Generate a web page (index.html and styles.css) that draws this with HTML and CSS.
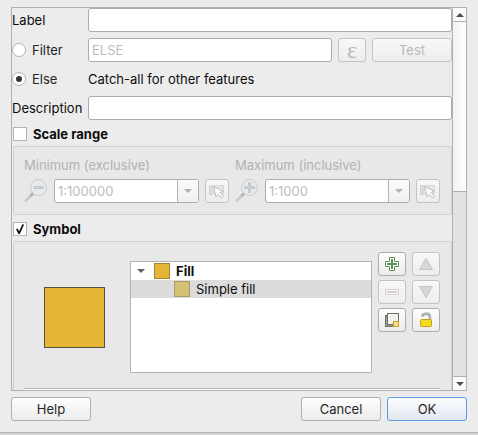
FILE: index.html
```html
<!DOCTYPE html>
<html lang="en">
<head>
<meta charset="utf-8">
<title>Edit Rule</title>
<link rel="stylesheet" href="styles.css">
</head>
<body>
<form class="dialog">
  <div class="scroll-area">
    <div class="viewport">
      <div class="rule-form">
        <label for="rule-label">Label</label>
        <input class="field" id="rule-label" type="text">

        <label class="choice"><input class="radio" type="radio" name="mode"><span>Filter</span></label>
        <div class="filter-row">
          <input class="field" type="text" aria-label="Filter expression" placeholder="ELSE" disabled>
          <button class="btn tool epsilon" type="button" aria-label="Expression builder" disabled>ε</button>
          <button class="btn wide" type="button" disabled>Test</button>
        </div>

        <label class="choice"><input class="radio" type="radio" name="mode" checked><span>Else</span></label>
        <span>Catch-all for other features</span>

        <label for="rule-description">Description</label>
        <input class="field" id="rule-description" type="text">
      </div>

      <section class="section">
        <label class="section-title"><input class="check" type="checkbox"><span>Scale range</span></label>
        <div class="group scales">
          <div class="scale">
            <label class="scale-label" for="scale-min">Minimum (exclusive)</label>
            <div class="scale-row">
              <svg class="lens" viewBox="0 0 24 24" aria-hidden="true">
                <path class="lens-handle" d="M1 22.500L8 15.500"/>
                <path class="lens-joint" d="M6.500 17L9 14.500"/>
                <circle class="lens-glass" cx="14.500" cy="8.500" r="8"/>
                <rect class="lens-sign" x="9.500" y="7.500" width="10" height="2" rx="1"/>
              </svg>
              <span class="combo">
                <select class="field" id="scale-min" disabled><option>1:100000</option></select>
              </span>
              <button class="btn pick" type="button" aria-label="Set minimum to canvas scale" disabled>
                <svg viewBox="0 0 18 18" aria-hidden="true">
                  <path class="pick-back" d="M1.500 3.500h3v9h-3z"/>
                  <path class="pick-map" d="M4.500 3.500h11v8h-11z"/>
                  <path class="pick-arrow" d="M5.500 4.500l2.500 10.500 2.200-2.500 3.300 3.500 2-2-3.300-3.300 3-1.700z"/>
                </svg>
              </button>
            </div>
          </div>
          <div class="scale">
            <label class="scale-label" for="scale-max">Maximum (inclusive)</label>
            <div class="scale-row">
              <svg class="lens" viewBox="0 0 24 24" aria-hidden="true">
                <path class="lens-handle" d="M1 22.500L8 15.500"/>
                <path class="lens-joint" d="M6.500 17L9 14.500"/>
                <circle class="lens-glass" cx="14.500" cy="8.500" r="8"/>
                <path class="lens-sign" d="M13.500 3.500h2v4h4v2h-4v4h-2v-4h-4v-2h4z"/>
              </svg>
              <span class="combo">
                <select class="field" id="scale-max" disabled><option>1:1000</option></select>
              </span>
              <button class="btn pick" type="button" aria-label="Set maximum to canvas scale" disabled>
                <svg viewBox="0 0 18 18" aria-hidden="true">
                  <path class="pick-back" d="M1.500 3.500h3v9h-3z"/>
                  <path class="pick-map" d="M4.500 3.500h11v8h-11z"/>
                  <path class="pick-arrow" d="M5.500 4.500l2.500 10.500 2.200-2.500 3.300 3.500 2-2-3.300-3.300 3-1.700z"/>
                </svg>
              </button>
            </div>
          </div>
        </div>
      </section>

      <section class="section">
        <label class="section-title"><input class="check" type="checkbox" checked><span>Symbol</span></label>
        <div class="group symbol">
          <div class="symbol-editor">
            <div class="preview"></div>
            <ul class="tree">
              <li class="tree-row">
                <svg class="expander" viewBox="0 0 8 4" aria-hidden="true"><path d="M0 0h8L4 4z"/></svg>
                <i class="swatch"></i><b>Fill</b>
              </li>
              <li class="tree-row child"><i class="swatch muted"></i><span>Simple fill</span></li>
            </ul>
            <div class="tools">
              <button class="btn tool" type="button" aria-label="Add symbol layer">
                <svg viewBox="0 0 16 16" aria-hidden="true">
                  <path d="M5.500 1.500h5v4h4v5h-4v4h-5v-4h-4v-5h4z" fill="#fff" stroke="#5b9159"/>
                  <path d="M7 3h2v4h4v2H9v4H7V9H3V7h4z" fill="#5b9159"/>
                </svg>
              </button>
              <button class="btn tool" type="button" aria-label="Move up" disabled>
                <svg viewBox="0 0 16 16" aria-hidden="true"><path d="M8 2.500L14.500 13.500h-13z" fill="#d6d8da" stroke="#c3c5c7"/></svg>
              </button>
              <button class="btn tool" type="button" aria-label="Remove symbol layer" disabled>
                <svg viewBox="0 0 16 16" aria-hidden="true">
                  <rect x="1.500" y="5.500" width="13" height="5" fill="#fafafa" stroke="#dccfcf"/>
                  <rect x="3" y="7" width="10" height="2" fill="#dfcfcf"/>
                </svg>
              </button>
              <button class="btn tool" type="button" aria-label="Move down" disabled>
                <svg viewBox="0 0 16 16" aria-hidden="true"><path d="M8 13.500L14.500 2.500h-13z" fill="#d6d8da" stroke="#c3c5c7"/></svg>
              </button>
              <button class="btn tool" type="button" aria-label="Duplicate layer">
                <svg viewBox="0 0 16 16" aria-hidden="true">
                  <rect x="1.500" y="3.500" width="10" height="11" fill="#9a9b95" stroke="#6e6f69"/>
                  <rect x="3.500" y="1.500" width="11" height="11" fill="#f2f2f0" stroke="#6e6f69"/>
                  <rect x="9.500" y="9.500" width="5" height="5" fill="#f7e08a" stroke="#c9a21c"/>
                </svg>
              </button>
              <button class="btn tool" type="button" aria-label="Unlock colour">
                <svg viewBox="0 0 16 16" aria-hidden="true">
                  <path d="M4 4.500C5 1 12 0 12 5.500V7" fill="none" stroke="#8f908c" stroke-width="2.500"/>
                  <path d="M4 4.500C5 1 12 0 12 5.500V7" fill="none" stroke="#e2e2e0"/>
                  <rect x="2.500" y="7.500" width="11" height="7" rx="1" fill="#f0dc1e" stroke="#c9a013"/>
                </svg>
              </button>
            </div>
          </div>
          <hr class="rule">
        </div>
      </section>
    </div>

    <div class="scrollbar">
      <button class="step" type="button" aria-label="Scroll up"><svg viewBox="0 0 8 4" aria-hidden="true"><path d="M0 4h8L4 0z"/></svg></button>
      <div class="track"><div class="thumb"></div></div>
      <button class="step down" type="button" aria-label="Scroll down"><svg viewBox="0 0 8 4" aria-hidden="true"><path d="M0 0h8L4 4z"/></svg></button>
    </div>
  </div>

  <footer class="actions">
    <button class="btn wide" type="button">Help</button>
    <span class="spacer"></span>
    <button class="btn wide" type="button">Cancel</button>
    <button class="btn wide default" type="submit">OK</button>
  </footer>
</form>
</body>
</html>
```
FILE: styles.css
```css
* {
  box-sizing: border-box;
}

body {
  margin: 0;
  background: #d2d2d2;
  color: #0c0c0c;
  font: 13px/16px Inter, "Liberation Sans", sans-serif;
}

button,
input,
select {
  margin: 0;
  font: inherit;
  color: inherit;
}

svg {
  display: block;
}

.dialog {
  display: flex;
  flex-direction: column;
  gap: 6px;
  height: calc(100vh - 2px);
  padding: 7px 11px 11px;
  border-bottom: 1px solid #b4b4b4;
  background: #ececec;
}

/* Scrolling panel */

.scroll-area {
  display: flex;
  flex: 1;
  min-height: 0;
  border: 1px solid #b0b0b0;
}

.viewport {
  flex: 1;
  min-width: 0;
  overflow: hidden;
}

.scrollbar {
  display: flex;
  flex-direction: column;
  width: 14px;
  border-left: 1px solid #b0b0b0;
}

.step {
  display: grid;
  place-items: center;
  height: 14px;
  padding: 0;
  border: 0;
  border-bottom: 1px solid #b0b0b0;
  background: #fafafa;
}

.step.down {
  border-top: 1px solid #b0b0b0;
  border-bottom: 0;
}

.step svg {
  width: 8px;
  fill: #4c4c4c;
}

.track {
  flex: 1;
  background: #e2e2e2;
}

.thumb {
  height: 48%;
  border-bottom: 1px solid #b0b0b0;
  background: linear-gradient(to right, #f1f1f1, #fff);
}

/* Fields and buttons */

.field {
  width: 100%;
  height: 24px;
  padding: 0 3px;
  border: 1px solid #acacac;
  border-radius: 3px;
  background: #fff;
}

.field:disabled {
  color: #bcbcbc;
  opacity: 1;
}

.field::placeholder {
  color: #bcbcbc;
}

.btn {
  display: grid;
  place-items: center;
  height: 24px;
  padding: 0;
  border: 1px solid #aeaeae;
  border-radius: 3px;
  background: linear-gradient(#fefefe, #ececec);
  color: #262626;
}

.btn:disabled {
  border-color: #c4c4c4;
  background: linear-gradient(#f8f8f8, #ededed);
  color: #b9b9b9;
}

.wide {
  width: 80px;
}

.tool {
  width: 28px;
}

.tool svg {
  width: 16px;
}

.epsilon {
  font: 24px/16px "Liberation Serif", serif;
}

.default {
  border-color: #5a9de6;
  background: linear-gradient(#fcfdfe, #e2e7ef);
}

.radio,
.check {
  display: grid;
  flex: none;
  place-items: center;
  width: 14px;
  height: 14px;
  border: 1px solid #b4b4b4;
  background: #fff;
  appearance: none;
}

.radio {
  border-radius: 50%;
}

.radio:checked::before {
  width: 6px;
  height: 6px;
  border-radius: 50%;
  background: #333;
  content: "";
}

.check:checked::before {
  width: 8px;
  height: 10px;
  background: #111;
  clip-path: polygon(0 50%, 20% 45%, 38% 72%, 82% 0, 100% 8%, 48% 100%, 30% 100%);
  content: "";
}

/* Rule form */

.rule-form {
  display: grid;
  grid-template-columns: 76px 1fr;
  grid-template-rows: 24px 24px 22px 24px;
  row-gap: 6px;
  align-items: center;
}

.choice {
  display: flex;
  gap: 6px;
  align-items: center;
  color: #262626;
}

.filter-row {
  display: flex;
  gap: 6px;
}

.filter-row .field {
  flex: 1;
  min-width: 0;
}

/* Sections */

.section {
  margin-left: 1px;
}

.section-title {
  display: flex;
  gap: 6px;
  align-items: center;
  height: 14px;
  margin: 7px 0 5px;
  font-weight: 700;
}

.group {
  padding: 10px 11px 11px 10px;
  border: 1px solid #d2d2d2;
  border-radius: 2px;
  background: #e8e8e8;
}

.scales {
  display: grid;
  grid-template-columns: 1fr 1fr;
  gap: 6px;
}

.scale {
  display: flex;
  flex-direction: column;
  gap: 6px;
  min-width: 0;
}

.scale-label {
  color: #b2b2b2;
}

.scale-row {
  display: flex;
  gap: 6px;
}

.lens {
  flex: none;
  width: 24px;
  height: 24px;
}

.lens-handle {
  stroke: #cfcbc0;
  stroke-width: 3;
}

.lens-joint {
  stroke: #b4b4b4;
  stroke-width: 3;
}

.lens-glass {
  fill: #e7e9ea;
  stroke: #c8c8c8;
}

.lens-sign {
  fill: #cdd2d6;
  stroke: #c0c5c9;
}

.combo {
  position: relative;
  flex: 1;
  min-width: 0;
}

.combo .field {
  display: block;
  padding-right: 24px;
  appearance: none;
}

.combo::before {
  position: absolute;
  top: 1px;
  right: 1px;
  bottom: 1px;
  width: 20px;
  border-left: 1px solid #b4b4b4;
  border-radius: 0 2px 2px 0;
  background: linear-gradient(#fbfbfb, #f0f0f0);
  content: "";
}

.combo::after {
  position: absolute;
  top: 10px;
  right: 7px;
  width: 8px;
  height: 4px;
  background: #b2b2b2;
  clip-path: polygon(0 0, 100% 0, 50% 100%);
  content: "";
}

.pick {
  flex: none;
  width: 24px;
}

.pick svg {
  width: 18px;
}

.pick-back {
  fill: #dedede;
  stroke: #d2d2d2;
}

.pick-map {
  fill: #e6e6e6;
  stroke: #d6d6d6;
}

.pick-arrow {
  fill: #fafafa;
  stroke: #bcbcbc;
}

/* Symbol editor */

.symbol-editor {
  display: grid;
  grid-template-columns: 100px 1fr 62px;
  gap: 6px;
}

.preview {
  place-self: center;
  width: 61px;
  height: 61px;
  border: 1px solid #55503f;
  background: #e5b636;
}

.tree {
  height: 112px;
  margin: 9px 0;
  padding: 0;
  border: 1px solid #b4b4b4;
  background: #fff;
  list-style: none;
}

.tree-row {
  display: flex;
  gap: 6px;
  align-items: center;
  height: 18px;
  padding-left: 6px;
}

.tree-row.child {
  padding-left: 43px;
  background: #dcdcdc;
}

.expander {
  width: 8px;
  margin-right: 3px;
  fill: #606060;
}

.swatch {
  width: 16px;
  height: 16px;
  border: 1px solid #a38534;
  background: #e5b636;
}

.swatch.muted {
  border-color: #a59a6c;
  background: #d6c074;
}

.tools {
  display: grid;
  grid-template-columns: 28px 28px;
  gap: 4px 6px;
  align-content: start;
}

.rule {
  margin: 6px 0 0;
  border: 0;
  border-top: 1px solid #b8b8b8;
  border-bottom: 1px solid #fff;
}

/* Dialog buttons */

.actions {
  display: flex;
  gap: 6px;
}

.spacer {
  flex: 1;
}
```
